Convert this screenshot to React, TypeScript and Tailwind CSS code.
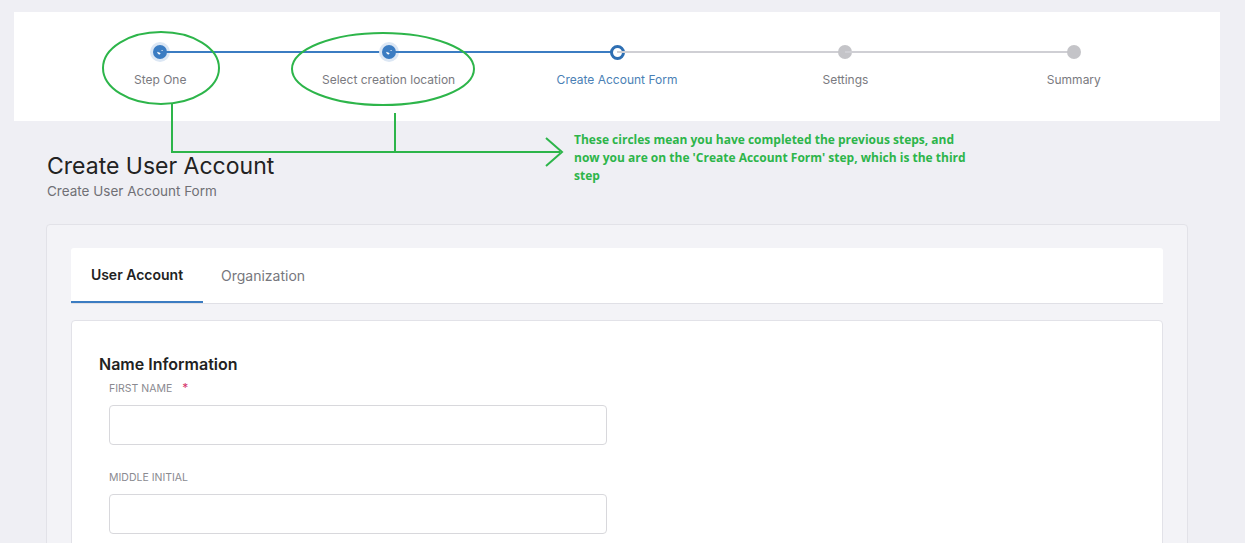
import React from "react";

const STEPS = [
  { label: "Step One", state: "done" },
  { label: "Select creation location", state: "done" },
  { label: "Create Account Form", state: "current" },
  { label: "Settings", state: "todo" },
  { label: "Summary", state: "todo" },
];

function Stepper() {
  return (
    <div className="ml-[14px] mt-[12px] w-[1206px] h-[109px] bg-white flex px-[32px]">
      {STEPS.map((s, i) => (
        <div key={s.label} className="relative flex-1 flex flex-col items-center pt-[30px]">
          {i > 0 && (
            <div
              className={
                "absolute top-[39px] right-1/2 w-full h-[2px] " +
                (s.state === "todo" ? "bg-[#cfcfd4]" : "bg-[#3b7cc2]")
              }
            />
          )}
          {s.state === "done" && (
            <div className="relative w-[20px] h-[20px] rounded-full bg-[#dce7f4] flex items-center justify-center">
              <div className="w-[14px] h-[14px] rounded-full bg-[#3b7cc2] flex items-center justify-center">
                <svg width="8" height="8" viewBox="0 0 8 8">
                  <path d="M1.5 4.2 L3.2 5.8 L6.5 2.3" stroke="white" strokeWidth="1.2" fill="none" />
                </svg>
              </div>
            </div>
          )}
          {s.state === "current" && (
            <div className="relative w-[20px] h-[20px] flex items-center justify-center">
              <div className="w-[15px] h-[15px] rounded-full bg-white border-[3px] border-[#2e6fb3]" />
            </div>
          )}
          {s.state === "todo" && (
            <div className="relative w-[20px] h-[20px] flex items-center justify-center">
              <div className="w-[14px] h-[14px] rounded-full bg-[#c4c4c8]" />
            </div>
          )}
          <div
            className={
              "mt-[9px] text-[12px] " +
              (s.state === "current" ? "text-[#4a7fb5]" : "text-[#7a7a80]")
            }
          >
            {s.label}
          </div>
        </div>
      ))}
    </div>
  );
}

function Field({ label, required }: { label: string; required?: boolean }) {
  return (
    <div className="ml-[10px]">
      <div className="text-[10.5px] text-[#8a8a90] uppercase flex gap-[10px]">
        {label}
        {required && <span className="text-[#d6336c] text-[12px] leading-[14px]">*</span>}
      </div>
      <div className="mt-[8px] w-[498px] h-[40px] rounded-[4px] border border-[#d8d8dc] bg-white" />
    </div>
  );
}

export default function App() {
  return (
    <div
      className="relative w-[1245px] h-[543px] overflow-hidden bg-[#efeff4]"
      style={{ fontFamily: "Inter, 'Noto Sans', sans-serif" }}
    >
      <Stepper />

      <div className="ml-[47px] mt-[31px]">
        <h1 className="text-[23px] leading-[28px] text-[#222]">Create User Account</h1>
        <p className="text-[13.5px] text-[#707076] mt-[1px]">Create User Account Form</p>
      </div>

      <div className="ml-[46px] mt-[23px] w-[1142px] h-[400px] bg-[#f3f3f7] border border-[#e2e2e8] rounded-[4px] px-[24px] pt-[23px]">
        <div className="h-[56px] bg-white border-b border-[#e0e0e6] flex items-stretch rounded-t-[3px]">
          <div className="w-[132px] flex items-center justify-center text-[14px] font-semibold text-[#222] border-b-2 border-[#3b7cc2]">
            User Account
          </div>
          <div className="px-[18px] flex items-center text-[14px] text-[#77777d]">Organization</div>
        </div>
        <div className="mt-[16px] bg-white border border-[#e2e2e8] rounded-[4px] h-[300px] pl-[27px] pt-[31px]">
          <h2 className="text-[16px] font-semibold text-[#222] mb-[5px]">Name Information</h2>
          <Field label="First Name" required />
          <div className="h-[25px]" />
          <Field label="Middle Initial" />
        </div>
      </div>

      <svg className="absolute left-0 top-0 pointer-events-none" width="1245" height="543">
        <g stroke="#2db54a" strokeWidth="2" fill="none">
          <ellipse cx="161" cy="68" rx="58" ry="36" />
          <ellipse cx="383" cy="69" rx="91" ry="36" />
          <path d="M172 104 V152 H560" />
          <path d="M395 113 V152" />
          <path d="M546 138 L562 152 L546 166" />
        </g>
      </svg>
      <div
        className="absolute left-[574px] top-[131px] w-[400px] text-[12px] leading-[18px] font-bold text-[#2db54a]"
        style={{ fontFamily: "'Open Sans', sans-serif" }}
      >
        These circles mean you have completed the previous steps, and now you are on the 'Create Account Form' step, which is the third step
      </div>
    </div>
  );
}
